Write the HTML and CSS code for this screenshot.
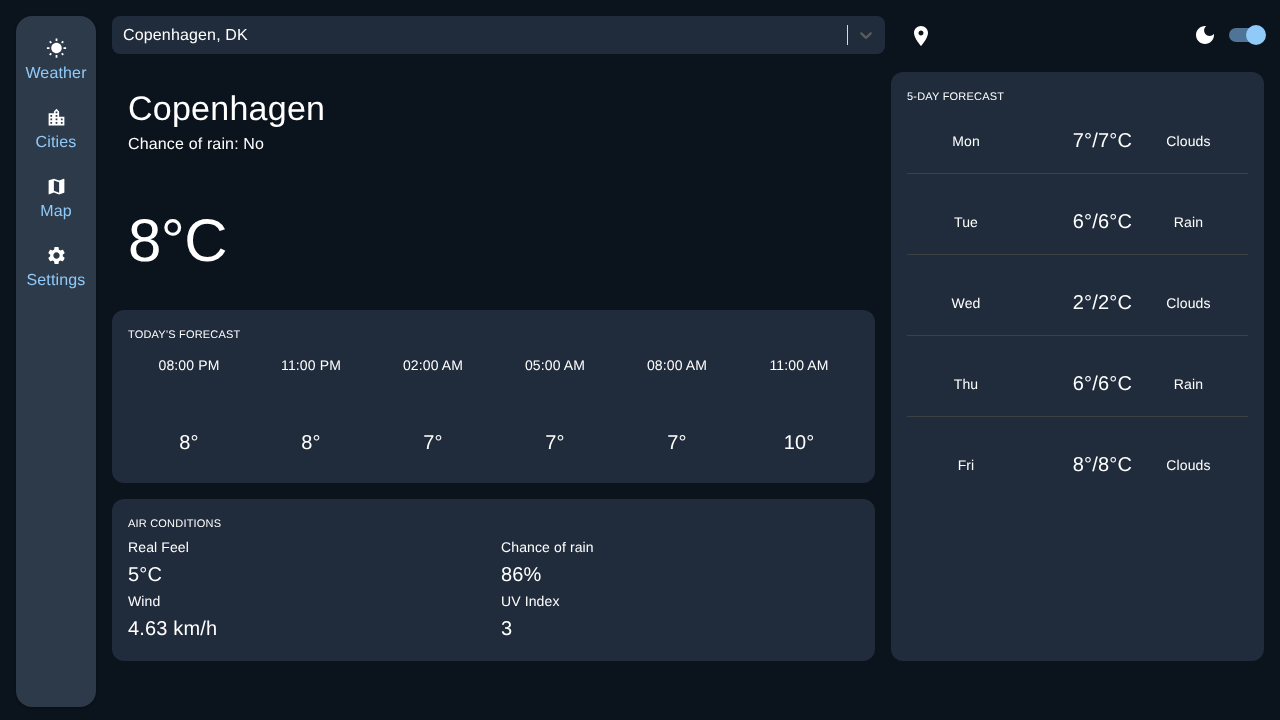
FILE: index.html
```html
<!DOCTYPE html>
<html lang="en">
<head>
  <meta charset="UTF-8" />
  <title>Weather</title>
  <link rel="stylesheet" href="styles.css">
</head>
<body>
  <nav class="sidebar">
    <a class="nav-item">
      <svg class="nav-icon" viewBox="0 0 24 24"><path d="M6.76 4.84l-1.8-1.79-1.41 1.41 1.79 1.79 1.42-1.41zM4 10.5H1v2h3v-2zm9-9.95h-2V3.5h2V.55zm7.45 3.91l-1.41-1.41-1.79 1.79 1.41 1.41 1.79-1.79zm-3.21 13.7l1.79 1.8 1.41-1.41-1.8-1.79-1.4 1.4zM20 10.5v2h3v-2h-3zm-8-5c-3.31 0-6 2.69-6 6s2.69 6 6 6 6-2.69 6-6-2.69-6-6-6zm-1 16.95h2V19.5h-2v2.95zm-7.45-3.91l1.41 1.41 1.79-1.8-1.41-1.41-1.79 1.8z"/></svg>
      <span>Weather</span>
    </a>
    <a class="nav-item">
      <svg class="nav-icon" viewBox="0 0 24 24"><path d="M15 11V5l-3-3-3 3v2H3v14h18V11h-6zm-8 8H5v-2h2v2zm0-4H5v-2h2v2zm0-4H5V9h2v2zm6 8h-2v-2h2v2zm0-4h-2v-2h2v2zm0-4h-2V9h2v2zm0-4h-2V5h2v2zm6 12h-2v-2h2v2zm0-4h-2v-2h2v2z"/></svg>
      <span>Cities</span>
    </a>
    <a class="nav-item">
      <svg class="nav-icon" viewBox="0 0 24 24"><path d="M20.5 3l-.16.03L15 5.1 9 3 3.36 4.9c-.21.07-.36.25-.36.48V20.5c0 .28.22.5.5.5l.16-.03L9 18.9l6 2.1 5.64-1.9c.21-.07.36-.25.36-.48V3.5c0-.28-.22-.5-.5-.5zM15 19l-6-2.11V5l6 2.11V19z"/></svg>
      <span>Map</span>
    </a>
    <a class="nav-item">
      <svg class="nav-icon" viewBox="0 0 24 24"><path d="M19.14 12.94c.04-.3.06-.61.06-.94 0-.32-.02-.64-.07-.94l2.03-1.58c.18-.14.23-.41.12-.61l-1.92-3.32c-.12-.22-.37-.29-.59-.22l-2.39.96c-.5-.38-1.03-.7-1.62-.94l-.36-2.54c-.04-.24-.24-.41-.48-.41h-3.84c-.24 0-.43.17-.47.41l-.36 2.54c-.59.24-1.13.57-1.62.94l-2.39-.96c-.22-.08-.47 0-.59.22L2.74 8.87c-.12.21-.08.47.12.61l2.03 1.58c-.05.3-.07.63-.07.94s.02.64.07.94l-2.03 1.58c-.18.14-.23.41-.12.61l1.92 3.32c.12.22.37.29.59.22l2.39-.96c.5.38 1.03.7 1.62.94l.36 2.54c.05.24.24.41.48.41h3.84c.24 0 .44-.17.47-.41l.36-2.54c.59-.24 1.13-.56 1.62-.94l2.39.96c.22.08.47 0 .59-.22l1.92-3.32c.12-.22.07-.47-.12-.61l-2.01-1.58zM12 15.6c-1.98 0-3.6-1.62-3.6-3.6s1.62-3.6 3.6-3.6 3.6 1.62 3.6 3.6-1.62 3.6-3.6 3.6z"/></svg>
      <span>Settings</span>
    </a>
  </nav>

  <div class="content">
    <div class="left-col">
      <div class="search">
        <span class="search-value">Copenhagen, DK</span>
        <span class="search-sep"></span>
        <svg class="search-arrow" viewBox="0 0 20 20"><path d="M4.516 7.548c0.436-0.446 1.043-0.481 1.576 0l3.908 3.747 3.908-3.747c0.533-0.481 1.141-0.446 1.576 0 0.436 0.445 0.408 1.197 0 1.615-0.406 0.418-4.695 4.502-4.695 4.502-0.217 0.223-0.502 0.335-0.789 0.335s-0.572-0.112-0.789-0.335c0 0-4.287-4.084-4.695-4.502s-0.436-1.17 0-1.615z"/></svg>
      </div>

      <section class="current">
        <h1>Copenhagen</h1>
        <p class="rain">Chance of rain: No</p>
        <div class="temp">8°C</div>
      </section>

      <section class="card today">
        <h2>Today's forecast</h2>
        <div class="hours">
          <div class="hour"><span>08:00 PM</span><b>8°</b></div>
          <div class="hour"><span>11:00 PM</span><b>8°</b></div>
          <div class="hour"><span>02:00 AM</span><b>7°</b></div>
          <div class="hour"><span>05:00 AM</span><b>7°</b></div>
          <div class="hour"><span>08:00 AM</span><b>7°</b></div>
          <div class="hour"><span>11:00 AM</span><b>10°</b></div>
        </div>
      </section>

      <section class="card air">
        <h2>Air conditions</h2>
        <div class="air-grid">
          <div class="air-item"><span>Real Feel</span><b>5°C</b></div>
          <div class="air-item"><span>Chance of rain</span><b>86%</b></div>
          <div class="air-item"><span>Wind</span><b>4.63 km/h</b></div>
          <div class="air-item"><span>UV Index</span><b>3</b></div>
        </div>
      </section>
    </div>

    <div class="right-col">
      <div class="topbar">
        <svg class="top-icon pin" viewBox="0 0 24 24"><path d="M12 2C8.13 2 5 5.13 5 9c0 5.25 7 13 7 13s7-7.75 7-13c0-3.87-3.13-7-7-7zm0 9.5c-1.38 0-2.5-1.12-2.5-2.5s1.12-2.5 2.5-2.5 2.5 1.12 2.5 2.5-1.12 2.5-2.5 2.5z"/></svg>
        <svg class="top-icon moon" viewBox="0 0 24 24"><path d="M12 3c-4.97 0-9 4.03-9 9s4.03 9 9 9 9-4.03 9-9c0-.46-.04-.92-.1-1.36-.98 1.37-2.58 2.26-4.4 2.26-2.98 0-5.4-2.42-5.4-5.4 0-1.81.89-3.42 2.26-4.4-.44-.06-.9-.1-1.36-.1z"/></svg>
        <div class="switch"><span class="switch-thumb"></span></div>
      </div>

      <section class="card week">
        <h2>5-day forecast</h2>
        <div class="day"><span class="day-name">Mon</span><b>7°/7°C</b><span class="day-desc">Clouds</span></div>
        <div class="day"><span class="day-name">Tue</span><b>6°/6°C</b><span class="day-desc">Rain</span></div>
        <div class="day"><span class="day-name">Wed</span><b>2°/2°C</b><span class="day-desc">Clouds</span></div>
        <div class="day"><span class="day-name">Thu</span><b>6°/6°C</b><span class="day-desc">Rain</span></div>
        <div class="day"><span class="day-name">Fri</span><b>8°/8°C</b><span class="day-desc">Clouds</span></div>
      </section>
    </div>
  </div>
</body>
</html>
```

FILE: styles.css
```css
* {
  box-sizing: border-box;
}
html, body {
  margin: 0;
  height: 100%;
}
body {
  display: flex;
  gap: 16px;
  padding: 16px;
  height: 720px;
  overflow: hidden;
  background: #0b131c;
  color: #fff;
  font-family: "Liberation Sans", Arial, sans-serif;
  font-size: 14px;
  letter-spacing: 0.12px;
  text-rendering: geometricPrecision;
}

/* Sidebar */
.sidebar {
  width: 80px;
  height: 691px;
  flex: none;
  padding-top: 22px;
  background: #2d3a4a;
  border-radius: 16px;
  box-shadow: 0 1px 3px rgba(0, 0, 0, 0.3);
  display: flex;
  flex-direction: column;
  gap: 21px;
  will-change: transform;
}
.nav-item {
  display: flex;
  flex-direction: column;
  align-items: center;
  gap: 6px;
  height: 48px;
  color: #90caf9;
  font-size: 16px;
  letter-spacing: 0.15px;
  line-height: 18px;
}
.nav-icon {
  width: 21px;
  height: 21px;
  fill: #fff;
}

.content {
  display: flex;
  width: 1152px;
  will-change: transform;
}
.left-col {
  width: 779px;
  padding-right: 16px;
}
.right-col {
  width: 373px;
}

/* Search */
.search {
  display: flex;
  align-items: center;
  width: 773px;
  height: 38px;
  padding: 0 9px 0 11px;
  background: #202b3b;
  border-radius: 8px;
  font-size: 16px;
  letter-spacing: 0.15px;
}
.search-value {
  flex: 1;
  padding-top: 2px;
}
.search-sep {
  width: 1px;
  height: 20px;
  background: #d9d9d9;
  margin-right: 8px;
}
.search-arrow {
  width: 20px;
  height: 20px;
  fill: #5c5c5c;
}

/* Current weather */
.current {
  height: 256px;
  padding: 36px 16px 0;
}
.current h1 {
  margin: 0;
  font-size: 34px;
  font-weight: 400;
  letter-spacing: 0.25px;
  line-height: 38px;
}
.rain {
  margin: 8px 0 0;
  font-size: 16px;
  letter-spacing: 0.15px;
  line-height: 18px;
}
.temp {
  margin-top: 52px;
  font-size: 60px;
  letter-spacing: -0.5px;
  line-height: 70px;
}

/* Cards */
.card {
  background: #202b3b;
  border-radius: 12px;
  padding: 16px;
}
.card h2 {
  margin: 0;
  font-size: 11px;
  font-weight: 400;
  letter-spacing: 0.2px;
  line-height: 16px;
  padding-top: 1px;
  text-transform: uppercase;
}

.today {
  height: 173px;
  margin-bottom: 16px;
}
.hours {
  display: grid;
  grid-template-columns: repeat(6, 122px);
  margin-top: 12px;
}
.hour {
  display: flex;
  flex-direction: column;
  align-items: center;
}
.hour span {
  line-height: 20px;
}
.hour b {
  margin-top: 56px;
  font-size: 20px;
  font-weight: 400;
  letter-spacing: 0.15px;
  line-height: 24px;
}

.air {
  height: 162px;
}
.air-grid {
  display: grid;
  grid-template-columns: 373px 1fr;
  margin-top: 5px;
}
.air-item {
  display: flex;
  flex-direction: column;
  height: 54px;
}
.air-item span {
  line-height: 20px;
}
.air-item b {
  margin-top: 6px;
  font-size: 20px;
  font-weight: 400;
  letter-spacing: 0.15px;
  line-height: 24px;
}

/* Top bar */
.topbar {
  display: flex;
  align-items: center;
  height: 38px;
  margin-bottom: 18px;
  padding-left: 18px;
}
.top-icon {
  width: 24px;
  height: 24px;
  fill: #fff;
}
.pin {
  margin-top: 2px;
}
.moon {
  margin-left: auto;
  margin-right: 12px;
}
.switch {
  position: relative;
  width: 34px;
  height: 14px;
  margin-right: 1px;
  background: #4f7497;
  border-radius: 7px;
}
.switch-thumb {
  position: absolute;
  top: -3px;
  right: -3px;
  width: 20px;
  height: 20px;
  background: #90caf9;
  border-radius: 50%;
}

/* 5-day */
.week {
  height: 589px;
  padding-bottom: 0;
}
.week h2 {
  margin-bottom: -12px;
}
.day {
  display: flex;
  align-items: center;
  height: 81px;
  padding-top: 16px;
  border-bottom: 1px solid #3e4044;
}
.day:last-child {
  border-bottom-color: transparent;
}
.day-name {
  width: 118px;
  text-align: center;
}
.day b {
  width: 107px;
  text-align: right;
  font-size: 20px;
  font-weight: 400;
  letter-spacing: 0.15px;
}
.day-desc {
  width: 113px;
  text-align: center;
}
```
